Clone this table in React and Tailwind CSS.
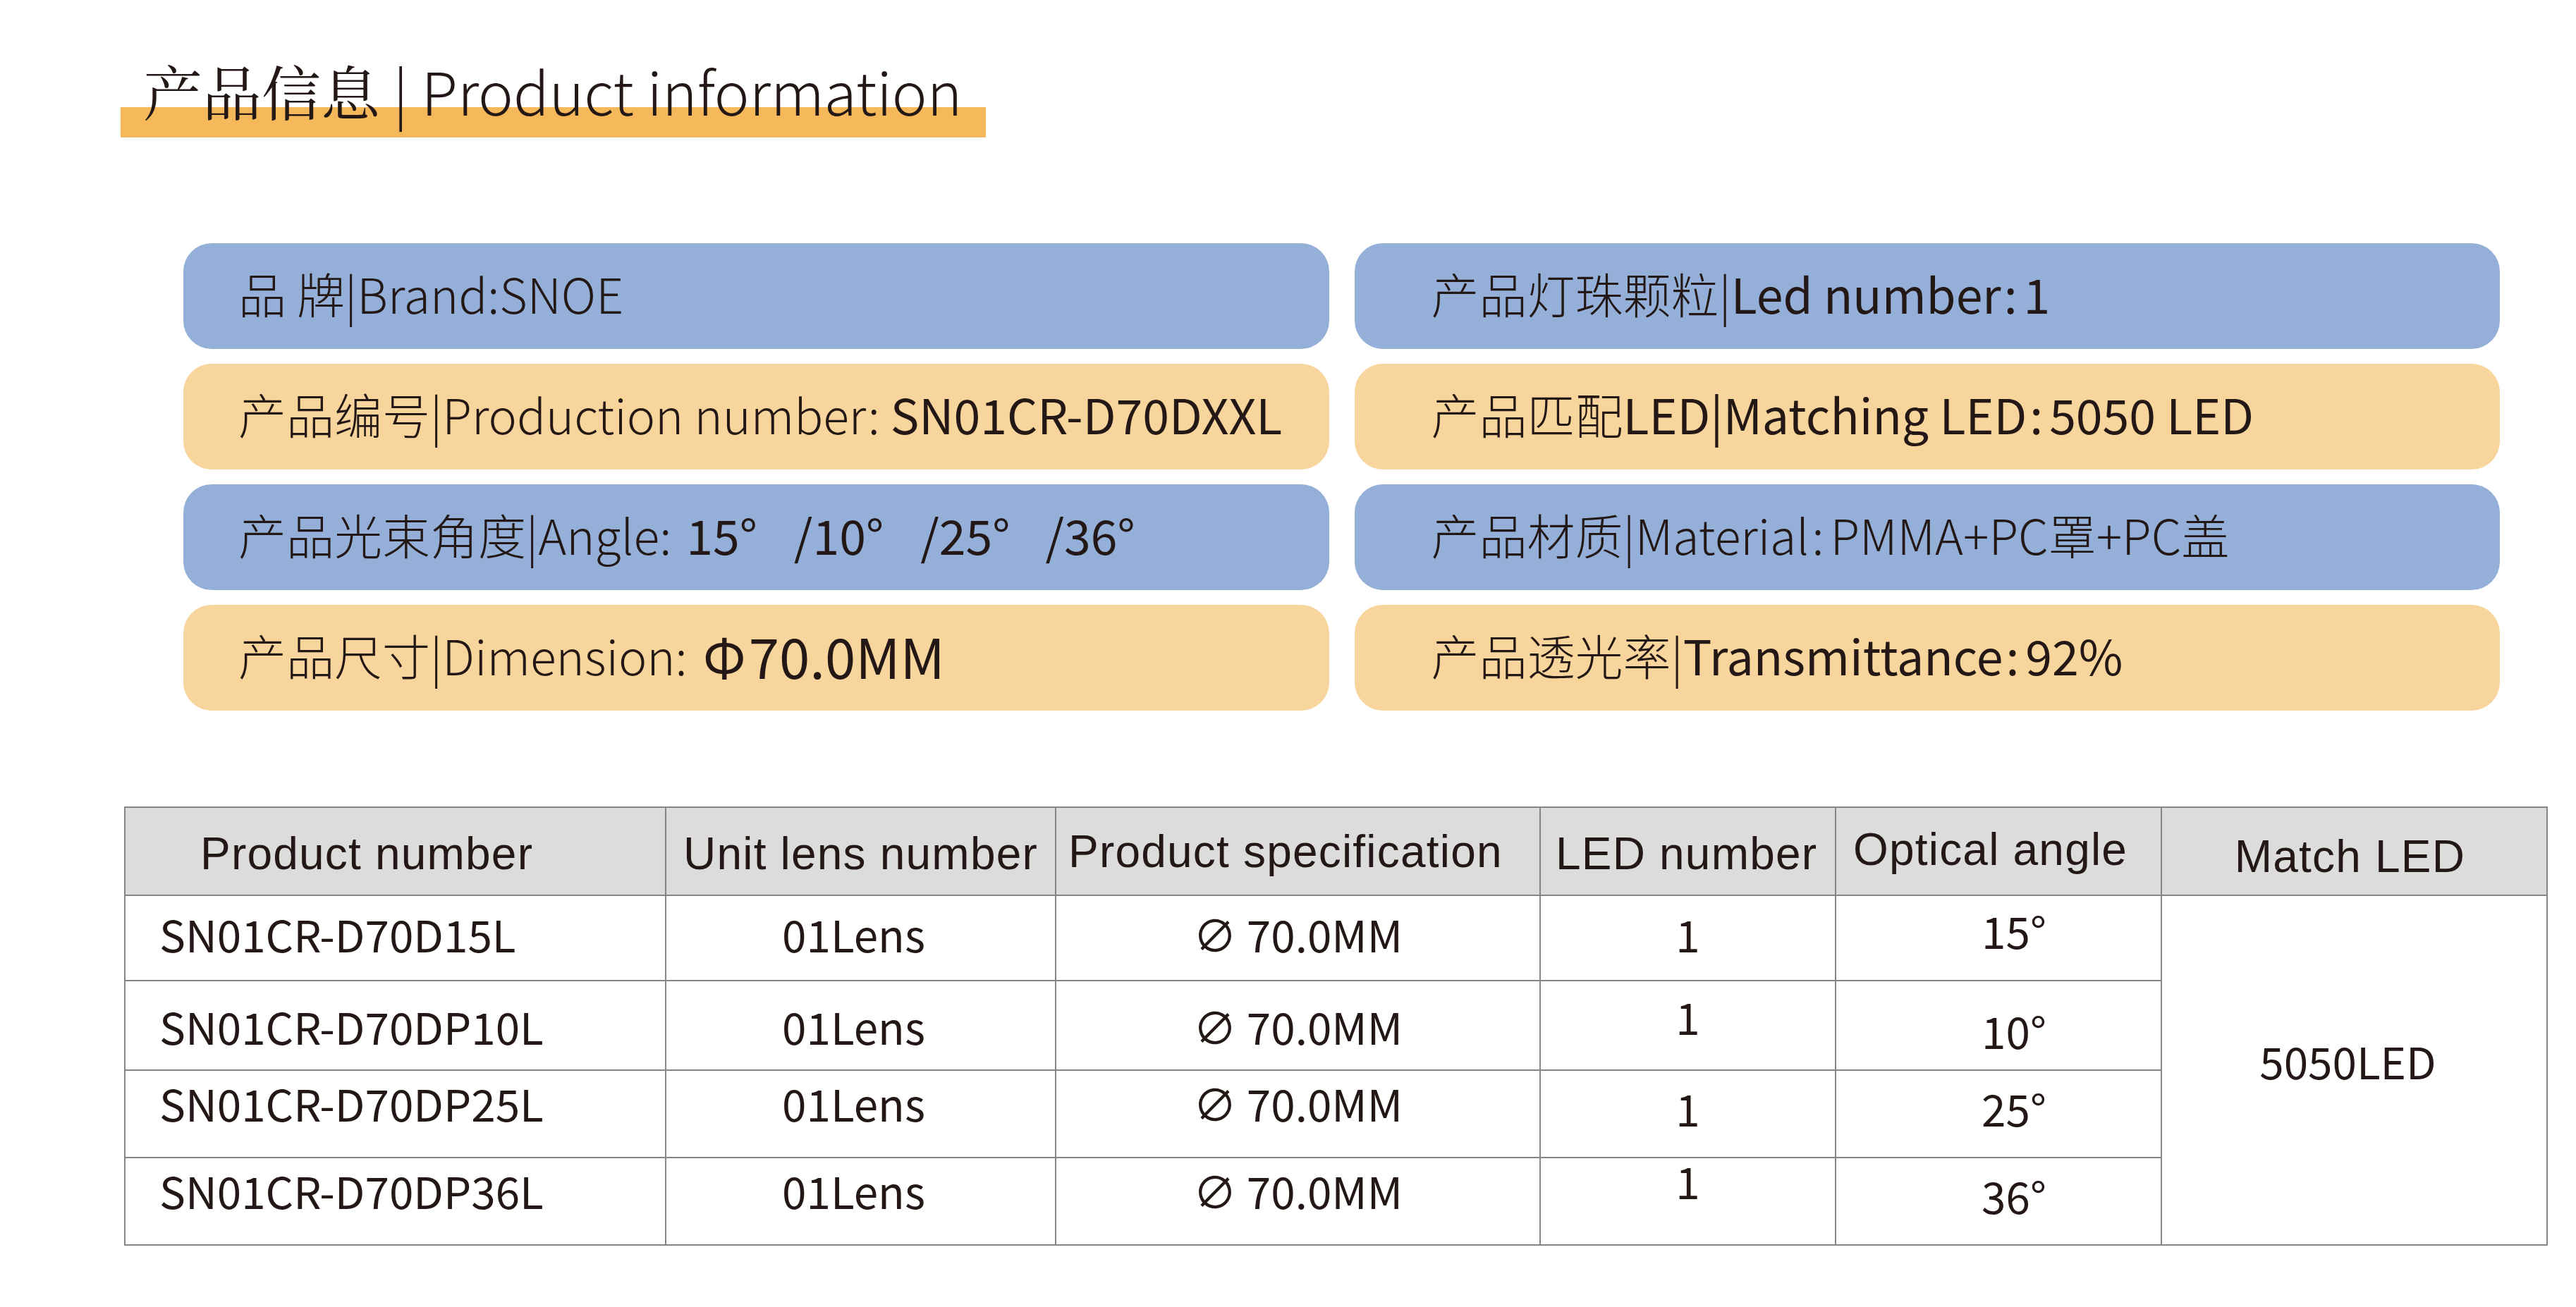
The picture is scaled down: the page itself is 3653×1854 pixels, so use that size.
export default function App() {
  const rows = [
    {
      n: 'SN01CR-D70D15L',
      a: '15',
      h: 'h-[121px]',
      c: 'pb-[14px]',
      c4: 'pb-[14px]',
      c5: 'pb-[24px]',
    },
    {
      n: 'SN01CR-D70DP10L',
      a: '10',
      h: 'h-[127px]',
      c: 'pb-[0px]',
      c4: 'pb-[28px]',
      c5: 'pt-[12px]',
    },
    {
      n: 'SN01CR-D70DP25L',
      a: '25',
      h: 'h-[124px]',
      c: 'pb-[32px]',
      c4: 'pb-[18px]',
      c5: 'pb-[18px]',
    },
    {
      n: 'SN01CR-D70DP36L',
      a: '36',
      h: 'h-[124px]',
      c: 'pb-[32px]',
      c4: 'pb-[60px]',
      c5: 'pb-[18px]',
    },
  ];

  return (
    <div className="w-[3653px] h-[1854px] bg-white overflow-hidden text-[#231815] font-['Noto_Sans_CJK_SC','Noto_Sans',sans-serif]">
      {/* Title */}
      <div className="relative ml-[171px] pt-[86px] w-[1227px]">
        <div className="relative h-[109px]">
          <div className="absolute left-0 bottom-0 w-full h-[43px] bg-[#f5b95b]" />
          <div className="relative pl-[32px] text-[84px] leading-none whitespace-nowrap">
            <span className="font-['Noto_Serif_CJK_SC','Noto_Sans_CJK_SC',serif]">产品信息</span>
            <span className="font-light"> | Product information</span>
          </div>
        </div>
      </div>

      {/* Info boxes */}
      <div className="ml-[260px] mt-[150px] w-[3285px] grid grid-cols-2 gap-x-[36px] gap-y-[21px] text-[68px] leading-none whitespace-nowrap">
        <div className="h-[150px] rounded-[40px] bg-[#94b0d9] flex items-center pl-[78px] pb-[8px] font-light">
          <span>品 牌|Brand:SNOE</span>
        </div>
        <div className="h-[150px] rounded-[40px] bg-[#94b0d9] flex items-center pl-[109px] pb-[8px]">
          <span className="font-light">产品灯珠颗粒|</span>
          <span>Led number</span>
          <span className="ml-[4px] mr-[9px]">:</span>
          <span>1</span>
        </div>

        <div className="h-[150px] rounded-[40px] bg-[#f8d59d] flex items-center pl-[78px] pb-[8px]">
          <span className="font-light">产品编号|Production number:&nbsp;</span>
          <span>SN01CR-D70DXXL</span>
        </div>
        <div className="h-[150px] rounded-[40px] bg-[#f8d59d] flex items-center pl-[109px] pb-[8px]">
          <span className="font-light">产品匹配</span>
          <span>LED|Matching LED</span>
          <span className="ml-[4px] mr-[9px]">:</span>
          <span>5050 LED</span>
        </div>

        <div className="h-[150px] rounded-[40px] bg-[#94b0d9] flex items-center pl-[78px] pb-[8px]">
          <span className="font-light">产品光束角度|Angle:&nbsp;</span>
          <span className="ml-[6px]">15°</span>
          <span className="ml-[52px]">/10°</span>
          <span className="ml-[52px]">/25°</span>
          <span className="ml-[50px]">/36°</span>
        </div>
        <div className="h-[150px] rounded-[40px] bg-[#94b0d9] flex items-center pl-[109px] pb-[8px] font-light">
          <span>产品材质|Material</span>
          <span className="ml-[4px] mr-[9px]">:</span>
          <span>PMMA+PC罩+PC盖</span>
        </div>

        <div className="h-[150px] rounded-[40px] bg-[#f8d59d] flex items-center pl-[78px] pb-[8px]">
          <span className="font-light">产品尺寸|Dimension:</span>
          <span className="ml-[22px] text-[76px]">Φ</span>
          <span className="ml-[4px] text-[78px]">70.0MM</span>
        </div>
        <div className="h-[150px] rounded-[40px] bg-[#f8d59d] flex items-center pl-[109px] pb-[8px]">
          <span className="font-light">产品透光率|</span>
          <span>Transmittance</span>
          <span className="ml-[4px] mr-[9px]">:</span>
          <span>92%</span>
        </div>
      </div>

      {/* Table */}
      <table className="ml-[176px] mt-[136px] w-[3435px] table-fixed border-collapse">
        <colgroup>
          <col className="w-[767px]" />
          <col className="w-[553px]" />
          <col className="w-[687px]" />
          <col className="w-[419px]" />
          <col className="w-[462px]" />
          <col className="w-[547px]" />
        </colgroup>
        <thead>
          <tr className="h-[125px] bg-[#dcdcdc] font-['Liberation_Sans',Arial,sans-serif] text-[64px] tracking-[1.2px] leading-none">
            <th className="border-2 border-[#858585] text-left font-normal pl-[106px] pt-[6px]">Product number</th>
            <th className="border-2 border-[#858585] text-left font-normal pl-[24px] pt-[6px]">Unit lens number</th>
            <th className="border-2 border-[#858585] text-left font-normal pl-[17px]">Product specification</th>
            <th className="border-2 border-[#858585] text-left font-normal pl-[21px] pt-[6px]">LED number</th>
            <th className="border-2 border-[#858585] text-left font-normal pl-[24px] pb-[6px]">Optical angle</th>
            <th className="border-2 border-[#858585] text-center font-normal pt-[14px] pr-[12px]">Match LED</th>
          </tr>
        </thead>
        <tbody className="text-[62px] leading-none">
          {rows.map((r, i) => (
            <tr key={r.n} className={r.h}>
              <td className={`border-2 border-[#858585] pl-[48px] ${r.c}`}>{r.n}</td>
              <td className={`border-2 border-[#858585] text-center pr-[20px] ${r.c}`}>01Lens</td>
              <td className={`border-2 border-[#858585] text-center ${r.c}`}>∅ 70.0MM</td>
              <td className={`border-2 border-[#858585] text-center ${r.c4}`}>1</td>
              <td className={`border-2 border-[#858585] text-center pl-[44px] ${r.c5}`}>{r.a}°</td>
              {i === 0 && (
                <td rowSpan={4} className="border-2 border-[#858585] text-center pr-[18px] pb-[28px]">
                  5050LED
                </td>
              )}
            </tr>
          ))}
        </tbody>
      </table>
    </div>
  );
}
